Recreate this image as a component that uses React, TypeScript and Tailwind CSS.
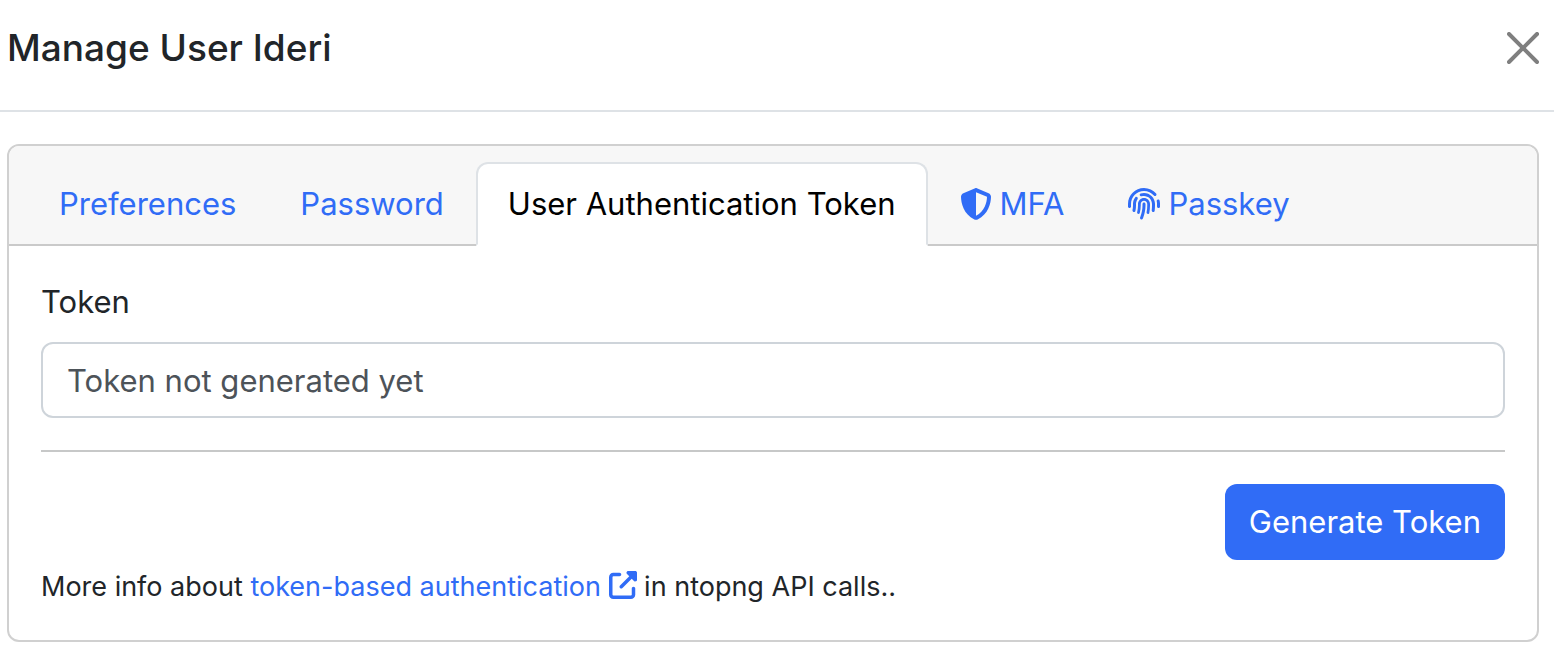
import { useState, type ReactNode } from "react";
import { FaFingerprint, FaShieldHalved, FaUpRightFromSquare } from "react-icons/fa6";

type Tab = { id: string; label: string; icon?: ReactNode };

const tabs: Tab[] = [
  { id: "preferences", label: "Preferences" },
  { id: "password", label: "Password" },
  { id: "token", label: "User Authentication Token" },
  { id: "mfa", label: "MFA", icon: <FaShieldHalved aria-hidden="true" className="size-8" /> },
  { id: "passkey", label: "Passkey", icon: <FaFingerprint aria-hidden="true" className="size-8" /> },
];

function CloseIcon() {
  return (
    <svg viewBox="0 0 16 16" className="size-8" fill="currentColor" aria-hidden="true">
      <path d="M.293.293a1 1 0 0 1 1.414 0L8 6.586 14.293.293a1 1 0 1 1 1.414 1.414L9.414 8l6.293 6.293a1 1 0 0 1-1.414 1.414L8 9.414l-6.293 6.293a1 1 0 0 1-1.414-1.414L6.586 8 .293 1.707a1 1 0 0 1 0-1.414z" />
    </svg>
  );
}

export default function App() {
  const [active, setActive] = useState("token");

  return (
    <div className="bg-white font-['Inter',sans-serif] text-[31px] leading-[48px] text-[#212529]">
      <header className="flex items-center justify-between border-b-2 border-[#dee2e6] pt-[18px] pr-[15px] pb-8 pl-[7px]">
        <h1 className="text-[37px] leading-[60px] font-medium">Manage User Ideri</h1>
        <button type="button" aria-label="Close" className="text-[#7f7f7f]">
          <CloseIcon />
        </button>
      </header>

      <main className="pt-8 pr-[15px] pb-2.5 pl-[7px]">
        <section className="rounded-xl border-2 border-[#d0d0d0]">
          <div role="tablist" className="flex rounded-t-[10px] border-b-2 border-[#cacaca] bg-[#f7f7f7] px-[18px] pt-4">
            {tabs.map((tab) => {
              const selected = tab.id === active;
              return (
                <button
                  key={tab.id}
                  type="button"
                  role="tab"
                  aria-selected={selected}
                  onClick={() => setActive(tab.id)}
                  className={
                    selected
                      ? "-mb-0.5 flex items-center gap-2 rounded-t-xl border-2 border-[#dee2e6] border-b-white bg-white px-[30px] py-4 text-black"
                      : "-mb-0.5 flex items-center gap-2 border-2 border-transparent px-[30px] py-4 text-[#306cf6]"
                  }
                >
                  {tab.icon}
                  {tab.label}
                </button>
              );
            })}
          </div>

          <form className="p-8" onSubmit={(event) => event.preventDefault()}>
            <label htmlFor="token" className="mb-4 block">
              Token
            </label>
            <input
              id="token"
              type="text"
              readOnly
              placeholder="Token not generated yet"
              className="block h-[76px] w-full rounded-xl border-2 border-[#ced4da] bg-white px-6 placeholder:text-[#4d5359] placeholder:opacity-100"
            />
            <hr className="my-8 border-t-2 border-[#c7c8c8]" />
            <div className="flex justify-end">
              <button type="submit" className="h-[76px] rounded-xl bg-[#306cf6] px-6 text-white">
                Generate Token
              </button>
            </div>
            <p className="mt-1.5 text-[27px] leading-[42px]">
              More info about{" "}
              <a href="#token-authentication" className="text-[#306cf6]">
                token-based authentication{" "}
                <FaUpRightFromSquare aria-hidden="true" className="inline size-7 align-[-3px]" />
              </a>{" "}
              in ntopng API calls..
            </p>
          </form>
        </section>
      </main>
    </div>
  );
}
